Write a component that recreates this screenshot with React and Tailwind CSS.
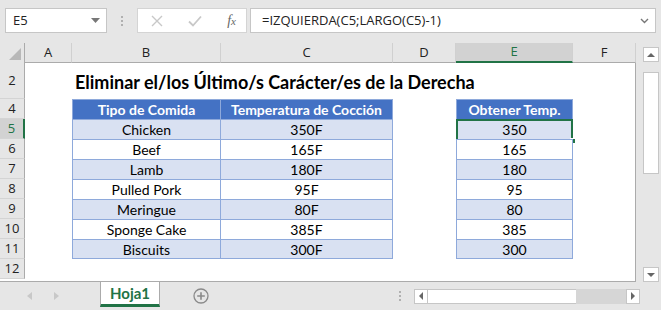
import React from 'react';

const cols = [
  { key: 'A', w: 'w-[47px]' },
  { key: 'B', w: 'w-[149px]' },
  { key: 'C', w: 'w-[172px]' },
  { key: 'D', w: 'w-[63px]' },
  { key: 'E', w: 'w-[117px]' },
  { key: 'F', w: 'w-[63px]' },
];

const data = [
  ['Chicken', '350F', '350'],
  ['Beef', '165F', '165'],
  ['Lamb', '180F', '180'],
  ['Pulled Pork', '95F', '95'],
  ['Meringue', '80F', '80'],
  ['Sponge Cake', '385F', '385'],
  ['Biscuits', '300F', '300'],
];

const cellFont = { fontFamily: 'Lato, "Open Sans", sans-serif' };

const RowHead = ({ n, h = 'h-[20px]', active }) => (
  <div
    className={`w-[25px] ${h} shrink-0 flex items-center justify-center border-b border-[#d4d4d4] text-[13px] ${
      active ? 'bg-[#d2d2d2] text-[#217346] border-r-2 border-r-[#217346]' : 'bg-[#e6e6e6] text-[#222] border-r border-r-[#ababab]'
    }`}
    style={{ fontFamily: '"Open Sans", sans-serif' }}
  >
    {n}
  </div>
);

const Empty = ({ w }) => <div className={`${w} shrink-0`} />;

export default function App() {
  return (
    <div
      className="w-[661px] h-[310px] bg-[#e6e6e6] flex flex-col overflow-hidden select-none"
      style={{ fontFamily: '"Open Sans", "Noto Sans", sans-serif' }}
    >
      {/* formula bar */}
      <div className="h-[43px] shrink-0 flex items-start pt-[8px] pl-[5px]">
        <div className="w-[102px] h-[25px] bg-white border border-[#c6c6c6] flex items-center justify-between pl-[7px] pr-[6px] text-[13px] text-[#222]">
          <span>E5</span>
          <svg width="9" height="5" viewBox="0 0 9 5"><path d="M0 0h9L4.5 5z" fill="#777" /></svg>
        </div>
        <div className="w-[30px] h-[25px] flex flex-col items-center justify-center gap-[2px]">
          <span className="w-[2px] h-[2px] bg-[#b0b0b0]" />
          <span className="w-[2px] h-[2px] bg-[#b0b0b0]" />
          <span className="w-[2px] h-[2px] bg-[#b0b0b0]" />
        </div>
        <div className="w-[110px] h-[25px] bg-white border border-[#d4d4d4] flex items-center pl-[13px] pr-[10px] justify-between">
          <svg width="12" height="12" viewBox="0 0 12 12"><path d="M1 1l10 10M11 1L1 11" stroke="#c8c8c8" strokeWidth="1.4" /></svg>
          <svg width="14" height="12" viewBox="0 0 14 12"><path d="M1 6.5l4 4L13 1.5" stroke="#c8c8c8" strokeWidth="1.8" fill="none" /></svg>
          <span className="text-[14px] text-[#666] italic" style={{ fontFamily: '"Liberation Serif", serif' }}>
            f<span className="text-[11px]">x</span>
          </span>
        </div>
        <div className="ml-[3px] w-[406px] h-[25px] bg-white border border-[#c6c6c6] flex items-center justify-between pl-[11px] pr-[6px] text-[13px] text-[#222]">
          <span>=IZQUIERDA(C5;LARGO(C5)-1)</span>
          <svg width="9" height="6" viewBox="0 0 9 6"><path d="M1 1l3.5 3.5L8 1" stroke="#777" strokeWidth="1.4" fill="none" /></svg>
        </div>
      </div>

      <div className="flex h-[239px] shrink-0">
        <div className="w-[636px] flex flex-col">
          {/* column headers */}
          <div className="flex h-[20px] shrink-0">
            <div className="w-[25px] h-full bg-[#e6e6e6] border-r border-[#ababab] flex items-end justify-end p-[3px]">
              <svg width="12" height="12" viewBox="0 0 12 12"><path d="M12 0v12H0z" fill="#b8b8b8" /></svg>
            </div>
            {cols.map((c) => (
              <div
                key={c.key}
                className={`${c.w} shrink-0 h-full flex items-center justify-center text-[13px] border-r border-r-[#d0d0d0] ${
                  c.key === 'E'
                    ? 'bg-[#d2d2d2] text-[#217346] border-b-2 border-b-[#217346]'
                    : 'bg-[#e6e6e6] text-[#222] border-b border-b-[#ababab]'
                }`}
              >
                {c.key}
              </div>
            ))}
          </div>

          {/* grid */}
          <div className="flex-1 bg-white border-b border-[#ababab] border-r flex flex-col" style={cellFont}>
            <div className="flex">
              <RowHead n={2} h="h-[36px]" />
              <Empty w="w-[47px]" />
              <div className="h-[36px] flex items-center pl-[3px] pt-[2px] text-[18px] font-bold text-black whitespace-nowrap">
                Eliminar el/los Último/s Carácter/es de la Derecha
              </div>
            </div>
            <div className="flex">
              <RowHead n={4} />
              <Empty w="w-[47px]" />
              <div className="w-[149px] h-[20px] bg-[#4472c4] border-l border-t border-r border-[#8ea9db] text-white font-bold text-[14px] flex items-center justify-center">
                Tipo de Comida
              </div>
              <div className="w-[172px] h-[20px] bg-[#4472c4] border-t border-r border-[#8ea9db] text-white font-bold text-[14px] flex items-center justify-center">
                Temperatura de Cocción
              </div>
              <Empty w="w-[63px]" />
              <div className="w-[117px] h-[20px] bg-[#4472c4] border-l border-t border-r border-[#8ea9db] text-white font-bold text-[14px] flex items-center justify-center">
                Obtener Temp.
              </div>
            </div>
            {data.map((r, i) => {
              const bg = i % 2 === 0 ? 'bg-[#d9e1f2]' : 'bg-white';
              const last = i === 6 ? 'border-b' : '';
              return (
                <div className="flex" key={r[0]}>
                  <RowHead n={i + 5} active={i === 0} />
                  <Empty w="w-[47px]" />
                  <div className={`w-[149px] h-[20px] ${bg} border-l border-t border-r border-[#8ea9db] ${last} text-[14px] text-black flex items-center justify-center`}>
                    {r[0]}
                  </div>
                  <div className={`w-[172px] h-[20px] ${bg} border-t border-r border-[#8ea9db] ${last} text-[14px] text-black flex items-center justify-center`}>
                    {r[1]}
                  </div>
                  <Empty w="w-[63px]" />
                  <div className={`relative w-[117px] h-[20px] ${bg} border-l border-t border-r border-[#8ea9db] ${last} text-[14px] text-black flex items-center justify-center`}>
                    {r[2]}
                    {i === 0 && (
                      <>
                        <div className="absolute -left-[1px] -top-[1px] -right-[1px] -bottom-[2px] border-2 border-[#217346]" />
                        <div className="absolute -right-[4px] -bottom-[5px] w-[6px] h-[6px] bg-[#217346] border border-white" />
                      </>
                    )}
                  </div>
                </div>
              );
            })}
            <div className="flex">
              <RowHead n={12} />
            </div>
          </div>
        </div>

        {/* vertical scrollbar */}
        <div className="w-[25px] flex flex-col items-center pl-[7px] pr-[2px] pt-[4px]">
          <div className="w-[16px] h-[15px] bg-white border border-[#c6c6c6] flex items-center justify-center">
            <svg width="8" height="4" viewBox="0 0 8 4"><path d="M0 4h8L4 0z" fill="#666" /></svg>
          </div>
          <div className="w-[16px] h-[102px] mt-[10px] bg-white border border-[#c6c6c6]" />
          <div className="flex-1" />
          <div className="w-[16px] h-[15px] bg-white border border-[#c6c6c6] flex items-center justify-center">
            <svg width="8" height="4" viewBox="0 0 8 4"><path d="M0 0h8L4 4z" fill="#666" /></svg>
          </div>
        </div>
      </div>

      {/* sheet tabs */}
      <div className="h-[28px] shrink-0 flex items-start">
        <div className="w-[100px] h-[28px] flex items-center pl-[27px] gap-[22px]">
          <svg width="5" height="8" viewBox="0 0 5 8"><path d="M5 0v8L0 4z" fill="#c8c8c8" /></svg>
          <svg width="5" height="8" viewBox="0 0 5 8"><path d="M0 0v8l5-4z" fill="#c8c8c8" /></svg>
        </div>
        <div className="w-[60px] h-[25px] bg-white border-l border-r border-[#ababab] border-b-[3px] border-b-[#217346] flex items-center justify-center text-[15px] font-bold text-[#217346]" style={cellFont}>
          Hoja1
        </div>
        <div className="w-[82px] h-[28px] flex items-center justify-center">
          <svg width="16" height="16" viewBox="0 0 16 16">
            <circle cx="8" cy="8" r="7" stroke="#8a8a8a" strokeWidth="1.3" fill="none" />
            <path d="M8 4.2v7.6M4.2 8h7.6" stroke="#8a8a8a" strokeWidth="1.6" />
          </svg>
        </div>
        <div className="flex-1" />
        <div className="h-[28px] flex items-center">
          <div className="flex flex-col gap-[2px] mr-[13px]">
            <span className="w-[2px] h-[2px] bg-[#b0b0b0]" />
            <span className="w-[2px] h-[2px] bg-[#b0b0b0]" />
            <span className="w-[2px] h-[2px] bg-[#b0b0b0]" />
          </div>
          <div className="w-[14px] h-[15px] bg-white border border-[#c6c6c6] flex items-center justify-center">
            <svg width="4" height="8" viewBox="0 0 4 8"><path d="M4 0v8L0 4z" fill="#666" /></svg>
          </div>
          <div className="w-[148px] h-[15px] bg-white border-y border-[#c6c6c6]" />
          <div className="w-[50px] h-[15px] bg-[#d6d6d6]" />
          <div className="w-[14px] h-[15px] bg-white border border-[#c6c6c6] flex items-center justify-center">
            <svg width="4" height="8" viewBox="0 0 4 8"><path d="M0 0v8l4-4z" fill="#666" /></svg>
          </div>
          <div className="w-[21px]" />
        </div>
      </div>
    </div>
  );
}
